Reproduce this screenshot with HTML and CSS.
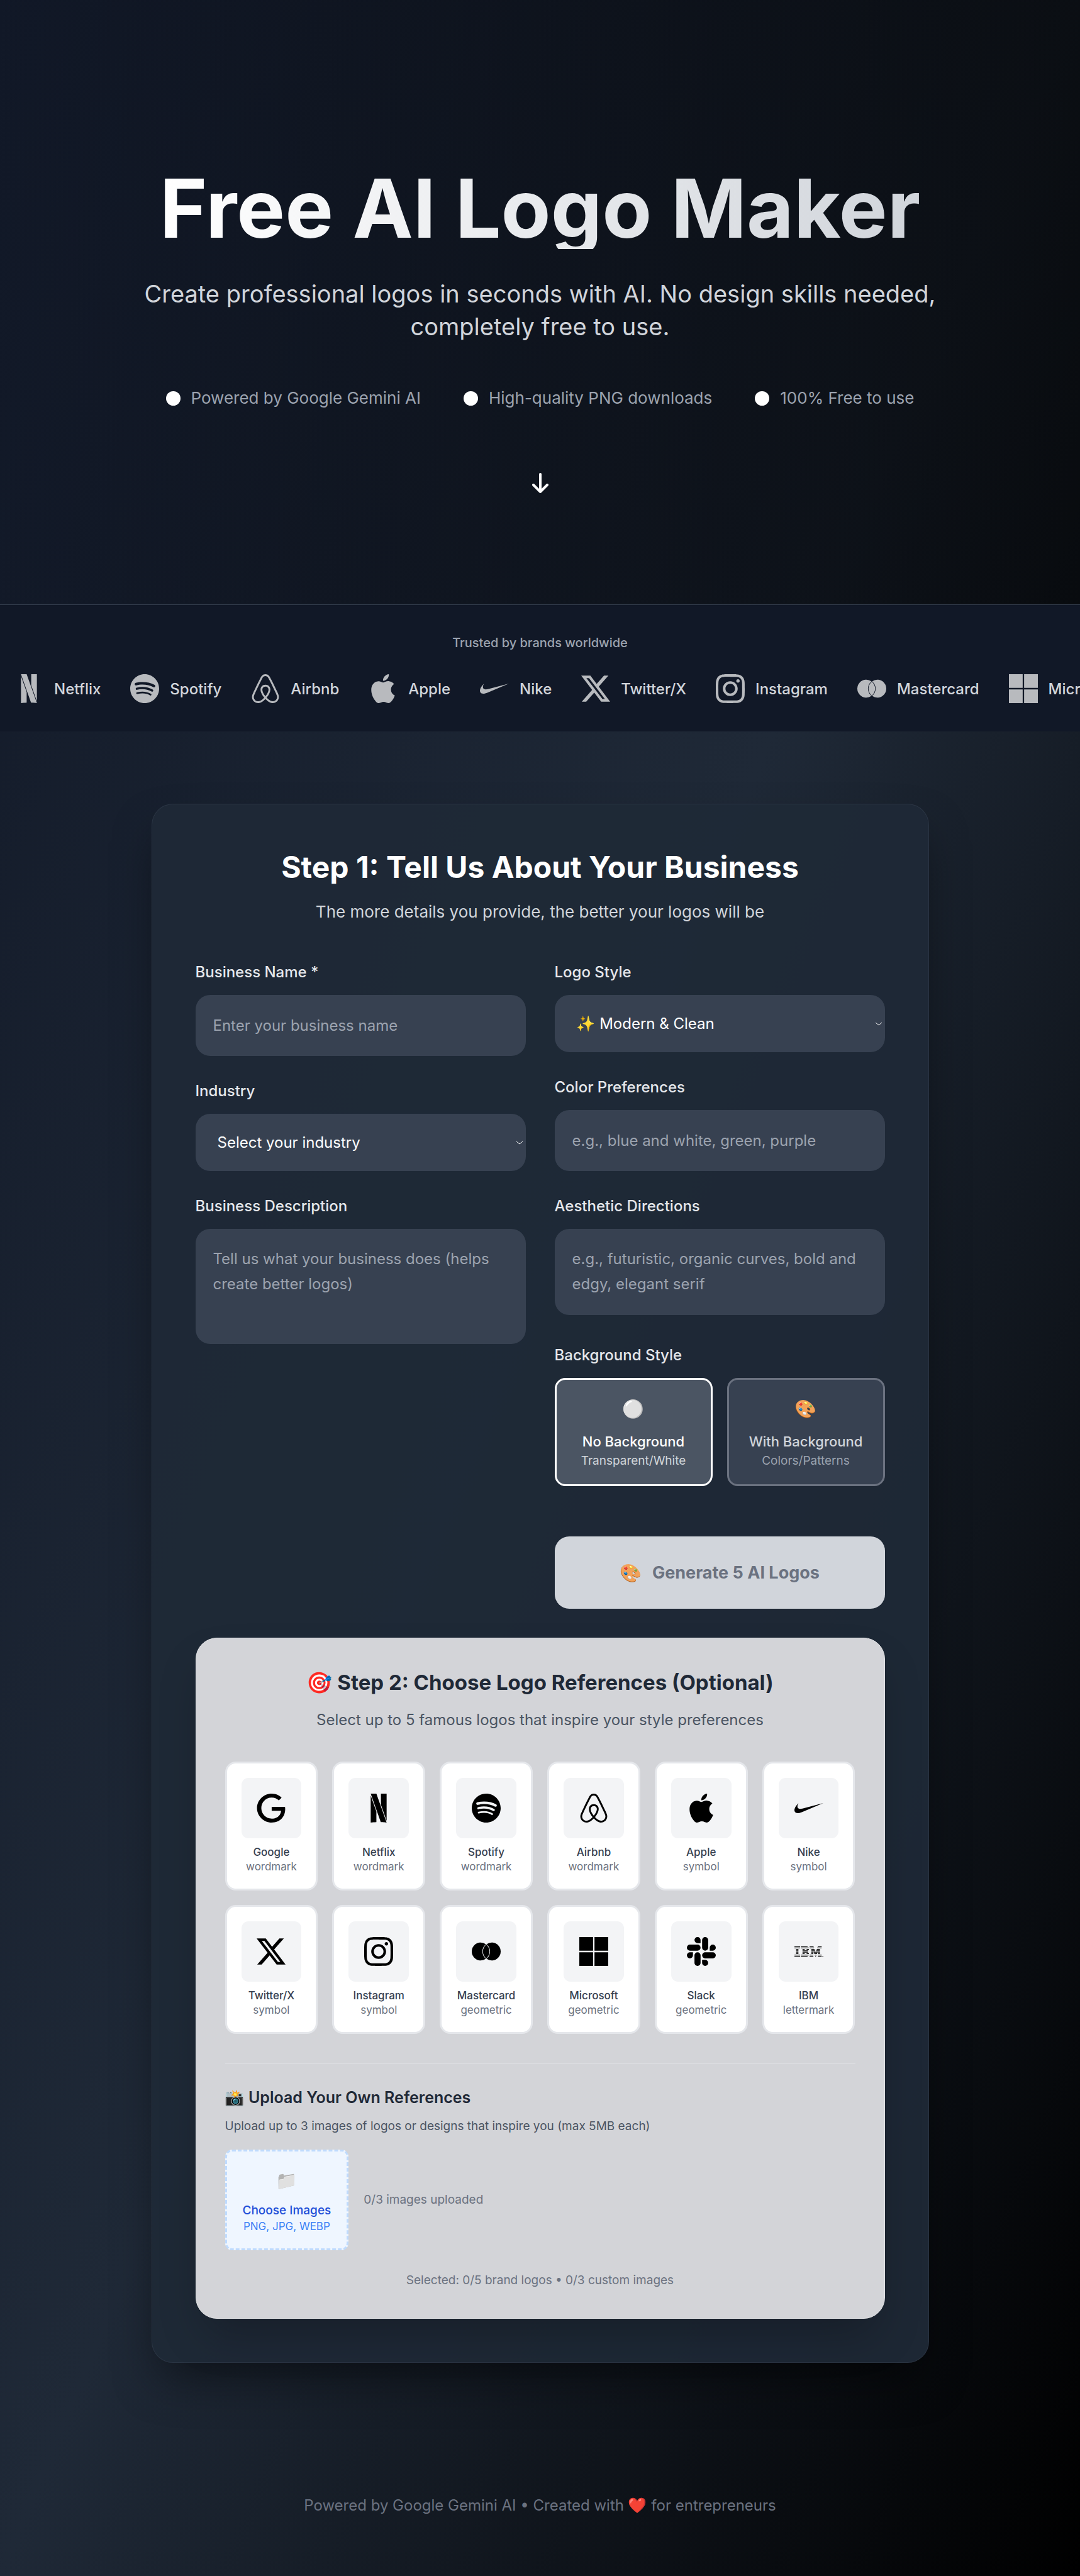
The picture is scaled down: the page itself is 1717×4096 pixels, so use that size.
FILE: index.html
```html
<!DOCTYPE html>
<html lang="en">
<head>
<meta charset="utf-8">
<meta name="viewport" content="width=device-width, initial-scale=1">
<title>Free AI Logo Maker</title>
<link rel="stylesheet" href="styles.css">
</head>
<body>
<svg class="sprite" aria-hidden="true">
  <symbol id="google" viewBox="0 0 24 24"><path d="M12.48 10.92v3.28h7.84c-.24 1.84-.853 3.187-1.787 4.133-1.147 1.147-2.933 2.4-6.053 2.4-4.827 0-8.6-3.893-8.6-8.72s3.773-8.72 8.6-8.72c2.6 0 4.507 1.027 5.907 2.347l2.307-2.307C18.747 1.44 16.133 0 12.48 0 5.867 0 .307 5.387.307 12s5.56 12 12.173 12c3.573 0 6.267-1.173 8.373-3.36 2.16-2.16 2.84-5.213 2.84-7.667 0-.76-.053-1.467-.173-2.053H12.48z"/></symbol>
  <symbol id="netflix" viewBox="0 0 24 24"><path d="m5.398 0 8.348 23.602c2.346.059 4.856.398 4.856.398L10.113 0H5.398zm8.489 0v9.172l4.715 13.33V0h-4.715zM5.398 1.5V24c1.873-.225 2.81-.312 4.715-.398V14.83L5.398 1.5z"/></symbol>
  <symbol id="spotify" viewBox="0 0 24 24"><path d="M12 0C5.4 0 0 5.4 0 12s5.4 12 12 12 12-5.4 12-12S18.66 0 12 0zm5.521 17.34c-.24.359-.66.48-1.021.24-2.82-1.74-6.36-2.101-10.561-1.141-.418.122-.779-.179-.899-.539-.12-.421.18-.78.54-.9 4.56-1.021 8.52-.6 11.64 1.32.42.18.479.659.301 1.02zm1.44-3.3c-.301.42-.841.6-1.262.3-3.239-1.98-8.159-2.58-11.939-1.38-.479.12-1.02-.12-1.14-.6-.12-.48.12-1.021.6-1.141C9.6 9.9 15 10.561 18.72 12.84c.361.181.54.78.241 1.2zm.12-3.36C15.24 8.4 8.82 8.16 5.16 9.301c-.6.179-1.2-.181-1.38-.721-.18-.601.18-1.2.72-1.381 4.26-1.26 11.28-1.02 15.721 1.621.539.3.719 1.02.419 1.56-.299.421-1.02.599-1.559.3z"/></symbol>
  <symbol id="airbnb" viewBox="0 0 24 24"><path d="M12.001 18.275c-1.353-1.697-2.148-3.184-2.413-4.457-.263-1.027-.16-1.848.291-2.465.477-.71 1.188-1.056 2.121-1.056s1.643.345 2.12 1.063c.446.61.558 1.432.286 2.465-.291 1.298-1.085 2.785-2.412 4.458zm9.601 1.14c-.185 1.246-1.034 2.28-2.2 2.783-2.253.98-4.483-.583-6.392-2.704 3.157-3.951 3.74-7.028 2.385-9.018-.795-1.14-1.933-1.695-3.394-1.695-2.944 0-4.563 2.49-3.927 5.382.37 1.565 1.352 3.343 2.917 5.332-.98 1.085-1.91 1.856-2.732 2.333-.636.344-1.245.558-1.828.609-2.679.399-4.778-2.2-3.825-4.88.132-.345.395-.98.845-1.961l.025-.053c1.464-3.178 3.242-6.79 5.285-10.795l.053-.132.58-1.116c.45-.822.635-1.19 1.351-1.643.346-.21.77-.315 1.246-.315.954 0 1.698.558 2.016 1.007.158.239.345.557.582.953l.558 1.089.08.159c2.041 4.004 3.821 7.608 5.279 10.794l.026.025.533 1.22.318.764c.243.613.294 1.222.213 1.858zm1.22-2.39c-.186-.583-.505-1.271-.9-2.094v-.03c-1.889-4.006-3.642-7.608-5.307-10.844l-.111-.163C15.317 1.461 14.468 0 12.001 0c-2.44 0-3.476 1.695-4.535 3.898l-.081.16c-1.669 3.236-3.421 6.843-5.303 10.847v.053l-.559 1.22c-.21.504-.317.768-.345.847C-.172 20.74 2.611 24 5.98 24c.027 0 .132 0 .265-.027h.372c1.75-.213 3.554-1.325 5.384-3.317 1.829 1.989 3.635 3.104 5.382 3.317h.372c.133.027.239.027.265.027 3.37.003 6.152-3.261 4.802-6.975z"/></symbol>
  <symbol id="apple" viewBox="0 0 24 24"><path d="M12.152 6.896c-.948 0-2.415-1.078-3.96-1.04-2.04.027-3.91 1.183-4.961 3.014-2.117 3.675-.546 9.103 1.519 12.09 1.013 1.454 2.208 3.09 3.792 3.039 1.52-.065 2.09-.987 3.935-.987 1.831 0 2.35.987 3.96.948 1.637-.026 2.676-1.48 3.676-2.948 1.156-1.688 1.636-3.325 1.662-3.415-.039-.013-3.182-1.221-3.22-4.857-.026-3.04 2.48-4.494 2.597-4.559-1.429-2.09-3.623-2.324-4.39-2.376-2-.156-3.675 1.09-4.61 1.09zM15.53 3.83c.843-1.012 1.4-2.427 1.245-3.83-1.207.052-2.662.805-3.532 1.818-.78.896-1.454 2.338-1.273 3.714 1.338.104 2.715-.688 3.559-1.701"/></symbol>
  <symbol id="nike" viewBox="0 0 24 24"><path d="M24 7.8L6.442 15.276c-1.456.616-2.679.925-3.668.925-1.12 0-1.933-.392-2.437-1.177-.317-.504-.41-1.143-.28-1.918.13-.775.476-1.6 1.036-2.478.467-.71 1.232-1.643 2.297-2.8a6.122 6.122 0 00-.784 1.848c-.28 1.195-.028 2.072.756 2.632.373.261.886.392 1.54.392.522 0 1.11-.084 1.764-.252L24 7.8z"/></symbol>
  <symbol id="twitter" viewBox="0 0 24 24"><path d="M18.901 1.153h3.68l-8.04 9.19L24 22.846h-7.406l-5.8-7.584-6.638 7.584H.474l8.6-9.83L0 1.154h7.594l5.243 6.932ZM17.61 20.644h2.039L6.486 3.24H4.298Z"/></symbol>
  <symbol id="instagram" viewBox="0 0 24 24"><path d="M12 0C8.74 0 8.333.015 7.053.072 5.775.132 4.905.333 4.14.63c-.789.306-1.459.717-2.126 1.384S.935 3.35.63 4.14C.333 4.905.131 5.775.072 7.053.012 8.333 0 8.74 0 12s.015 3.667.072 4.947c.06 1.277.261 2.148.558 2.913.306.788.717 1.459 1.384 2.126.667.666 1.336 1.079 2.126 1.384.766.296 1.636.499 2.913.558C8.333 23.988 8.74 24 12 24s3.667-.015 4.947-.072c1.277-.06 2.148-.262 2.913-.558.788-.306 1.459-.718 2.126-1.384.666-.667 1.079-1.335 1.384-2.126.296-.765.499-1.636.558-2.913.06-1.28.072-1.687.072-4.947s-.015-3.667-.072-4.947c-.06-1.277-.262-2.149-.558-2.913-.306-.789-.718-1.459-1.384-2.126C21.319 1.347 20.651.935 19.86.63c-.765-.297-1.636-.499-2.913-.558C15.667.012 15.26 0 12 0zm0 2.16c3.203 0 3.585.016 4.85.071 1.17.055 1.805.249 2.227.415.562.217.96.477 1.382.896.419.42.679.819.896 1.381.164.422.36 1.057.413 2.227.057 1.266.07 1.646.07 4.85s-.015 3.585-.074 4.85c-.061 1.17-.256 1.805-.421 2.227-.224.562-.479.96-.899 1.382-.419.419-.824.679-1.38.896-.42.164-1.065.36-2.235.413-1.274.057-1.649.07-4.859.07-3.211 0-3.586-.015-4.859-.074-1.171-.061-1.816-.256-2.236-.421-.569-.224-.96-.479-1.379-.899-.421-.419-.69-.824-.9-1.38-.165-.42-.359-1.065-.42-2.235-.045-1.26-.061-1.649-.061-4.844 0-3.196.016-3.586.061-4.861.061-1.17.255-1.814.42-2.234.21-.57.479-.96.9-1.381.419-.419.81-.689 1.379-.898.42-.166 1.051-.361 2.221-.421 1.275-.045 1.65-.06 4.859-.06l.045.03zm0 3.678c-3.405 0-6.162 2.76-6.162 6.162 0 3.405 2.76 6.162 6.162 6.162 3.405 0 6.162-2.76 6.162-6.162 0-3.405-2.76-6.162-6.162-6.162zM12 16c-2.21 0-4-1.79-4-4s1.79-4 4-4 4 1.79 4 4-1.79 4-4 4zm7.846-10.405c0 .795-.646 1.44-1.44 1.44-.795 0-1.44-.646-1.44-1.44 0-.794.646-1.439 1.44-1.439.793-.001 1.44.645 1.44 1.439z"/></symbol>
  <symbol id="mastercard" viewBox="0 0 24 24"><path d="M11.734 5.944A7.43 7.43 0 1 0 11.734 18.056A7.75 7.75 0 0 1 11.734 5.944ZM12.266 5.944A7.43 7.43 0 1 1 12.266 18.056A7.75 7.75 0 0 0 12.266 5.944ZM12 6.307A7.3 7.3 0 0 1 12 17.693A7.3 7.3 0 0 1 12 6.307Z"/></symbol>
  <symbol id="microsoft" viewBox="0 0 24 24"><path d="M0 0v11.408h11.408V0zm12.594 0v11.408H24V0zM0 12.594V24h11.408V12.594zm12.594 0V24H24V12.594z"/></symbol>
  <symbol id="slack" viewBox="0 0 24 24"><path d="M5.042 15.165a2.528 2.528 0 0 1-2.52 2.523A2.528 2.528 0 0 1 0 15.165a2.527 2.527 0 0 1 2.522-2.52h2.52v2.52zM6.313 15.165a2.527 2.527 0 0 1 2.521-2.52 2.527 2.527 0 0 1 2.521 2.52v6.313A2.528 2.528 0 0 1 8.834 24a2.528 2.528 0 0 1-2.521-2.522v-6.313zM8.834 5.042a2.528 2.528 0 0 1-2.521-2.52A2.528 2.528 0 0 1 8.834 0a2.528 2.528 0 0 1 2.521 2.522v2.52H8.834zM8.834 6.313a2.528 2.528 0 0 1 2.521 2.521 2.528 2.528 0 0 1-2.521 2.521H2.522A2.528 2.528 0 0 1 0 8.834a2.528 2.528 0 0 1 2.522-2.521h6.312zM18.956 8.834a2.528 2.528 0 0 1 2.522-2.521A2.528 2.528 0 0 1 24 8.834a2.528 2.528 0 0 1-2.522 2.521h-2.522V8.834zM17.688 8.834a2.528 2.528 0 0 1-2.523 2.521 2.527 2.527 0 0 1-2.52-2.521V2.522A2.527 2.527 0 0 1 15.165 0a2.528 2.528 0 0 1 2.523 2.522v6.312zM15.165 18.956a2.528 2.528 0 0 1 2.523 2.522A2.528 2.528 0 0 1 15.165 24a2.527 2.527 0 0 1-2.52-2.522v-2.522h2.52zM15.165 17.688a2.527 2.527 0 0 1-2.52-2.523 2.526 2.526 0 0 1 2.52-2.52h6.313A2.527 2.527 0 0 1 24 15.165a2.528 2.528 0 0 1-2.522 2.523h-6.313z"/></symbol>
  <symbol id="ibm" viewBox="0 0 24 24"><g fill="none" stroke="currentColor" stroke-width=".62">
    <path d="M0 7.8h4.7M5.3 7.8h5.6M12.6 7.8h3.3M19.3 7.8h3.3"/>
    <path d="M0 9h4.7M5.3 9h6.5M12.6 9h3.7M18.9 9h3.7"/>
    <path d="M1.4 10.2h1.9M6.7 10.2h1.8M10.1 10.2h1.9M14 10.2h2.7M18.5 10.2h2.7"/>
    <path d="M1.4 11.4h1.9M6.7 11.4h4.6M14 11.4h3.1M18.1 11.4h3.1"/>
    <path d="M1.4 12.6h1.9M6.7 12.6h4.6M14 12.6h1.7M16 12.6h3.2M19.5 12.6h1.7"/>
    <path d="M1.4 13.8h1.9M6.7 13.8h1.8M10.1 13.8h1.9M14 13.8h1.7M16.4 13.8h2.4M19.5 13.8h1.7"/>
    <path d="M0 15h4.7M5.3 15h6.5M12.6 15h3.1M16.8 15h1.6M19.5 15h3.1"/>
    <path d="M0 16.2h4.7M5.3 16.2h5.6M12.6 16.2h3.1M17.3 16.2h.6M19.5 16.2h3.1M23.2 16.2h.7"/></g></symbol>
</svg>

<header class="hero">
  <h1 class="hero-title">Free AI Logo Maker</h1>
  <p class="hero-lead">Create professional logos in seconds with AI. No design skills needed, completely free to use.</p>
  <ul class="features">
    <li class="feature">Powered by Google Gemini AI</li>
    <li class="feature">High-quality PNG downloads</li>
    <li class="feature">100% Free to use</li>
  </ul>
  <svg class="hero-arrow" viewBox="0 0 26 32" aria-hidden="true"><path d="M13 2v28M2 19l11 11 11-11"/></svg>
</header>

<section class="brands">
  <p class="brands-title">Trusted by brands worldwide</p>
  <ul class="brand-list">
    <li class="brand"><svg class="logo"><use href="#netflix"/></svg>Netflix</li>
    <li class="brand"><svg class="logo"><use href="#spotify"/></svg>Spotify</li>
    <li class="brand"><svg class="logo"><use href="#airbnb"/></svg>Airbnb</li>
    <li class="brand"><svg class="logo"><use href="#apple"/></svg>Apple</li>
    <li class="brand"><svg class="logo"><use href="#nike"/></svg>Nike</li>
    <li class="brand"><svg class="logo"><use href="#twitter"/></svg>Twitter/X</li>
    <li class="brand"><svg class="logo"><use href="#instagram"/></svg>Instagram</li>
    <li class="brand"><svg class="logo"><use href="#mastercard"/></svg>Mastercard</li>
    <li class="brand"><svg class="logo"><use href="#microsoft"/></svg>Microsoft</li>
  </ul>
</section>

<main class="main">
  <form class="card">
    <div class="card-head">
      <h2 class="card-title">Step 1: Tell Us About Your Business</h2>
      <p class="card-lead">The more details you provide, the better your logos will be</p>
    </div>

    <div class="form-grid">
      <div class="column">
        <div class="field">
          <label class="label" for="name">Business Name *</label>
          <input class="control" id="name" type="text" placeholder="Enter your business name">
        </div>
        <div class="field">
          <label class="label" for="industry">Industry</label>
          <div class="select-wrap">
            <select class="control select" id="industry"><option>Select your industry</option></select>
            <svg class="chevron" viewBox="0 0 12 8" aria-hidden="true"><path d="M1 2l5 4 5-4"/></svg>
          </div>
        </div>
        <div class="field">
          <label class="label" for="description">Business Description</label>
          <textarea class="control area area-tall" id="description" placeholder="Tell us what your business does (helps create better logos)"></textarea>
        </div>
      </div>

      <div class="column">
        <div class="field">
          <label class="label" for="style">Logo Style</label>
          <div class="select-wrap">
            <select class="control select" id="style"><option>✨ Modern &amp; Clean</option></select>
            <svg class="chevron" viewBox="0 0 12 8" aria-hidden="true"><path d="M1 2l5 4 5-4"/></svg>
          </div>
        </div>
        <div class="field">
          <label class="label" for="colors">Color Preferences</label>
          <input class="control" id="colors" type="text" placeholder="e.g., blue and white, green, purple">
        </div>
        <div class="field">
          <label class="label" for="aesthetic">Aesthetic Directions</label>
          <textarea class="control area" id="aesthetic" placeholder="e.g., futuristic, organic curves, bold and edgy, elegant serif"></textarea>
        </div>
        <div class="field" role="group" aria-labelledby="bg-label">
          <span class="label" id="bg-label">Background Style</span>
          <div class="options">
            <button class="option option-active" type="button" aria-pressed="true"><span class="emoji">⚪</span><span class="option-name">No Background</span><span class="option-note">Transparent/White</span></button>
            <button class="option" type="button" aria-pressed="false"><span class="emoji">🎨</span><span class="option-name">With Background</span><span class="option-note">Colors/Patterns</span></button>
          </div>
        </div>
        <button class="generate" type="submit"><span class="emoji">🎨</span>Generate 5 AI Logos</button>
      </div>
    </div>

    <section class="panel">
      <h3 class="panel-title">🎯 Step 2: Choose Logo References (Optional)</h3>
      <p class="panel-lead">Select up to 5 famous logos that inspire your style preferences</p>
      <div class="tiles">
        <button class="tile" type="button"><span class="tile-icon"><svg class="logo"><use href="#google"/></svg></span><span class="tile-name">Google</span><span class="tile-kind">wordmark</span></button>
        <button class="tile" type="button"><span class="tile-icon"><svg class="logo"><use href="#netflix"/></svg></span><span class="tile-name">Netflix</span><span class="tile-kind">wordmark</span></button>
        <button class="tile" type="button"><span class="tile-icon"><svg class="logo"><use href="#spotify"/></svg></span><span class="tile-name">Spotify</span><span class="tile-kind">wordmark</span></button>
        <button class="tile" type="button"><span class="tile-icon"><svg class="logo"><use href="#airbnb"/></svg></span><span class="tile-name">Airbnb</span><span class="tile-kind">wordmark</span></button>
        <button class="tile" type="button"><span class="tile-icon"><svg class="logo"><use href="#apple"/></svg></span><span class="tile-name">Apple</span><span class="tile-kind">symbol</span></button>
        <button class="tile" type="button"><span class="tile-icon"><svg class="logo"><use href="#nike"/></svg></span><span class="tile-name">Nike</span><span class="tile-kind">symbol</span></button>
        <button class="tile" type="button"><span class="tile-icon"><svg class="logo"><use href="#twitter"/></svg></span><span class="tile-name">Twitter/X</span><span class="tile-kind">symbol</span></button>
        <button class="tile" type="button"><span class="tile-icon"><svg class="logo"><use href="#instagram"/></svg></span><span class="tile-name">Instagram</span><span class="tile-kind">symbol</span></button>
        <button class="tile" type="button"><span class="tile-icon"><svg class="logo"><use href="#mastercard"/></svg></span><span class="tile-name">Mastercard</span><span class="tile-kind">geometric</span></button>
        <button class="tile" type="button"><span class="tile-icon"><svg class="logo"><use href="#microsoft"/></svg></span><span class="tile-name">Microsoft</span><span class="tile-kind">geometric</span></button>
        <button class="tile" type="button"><span class="tile-icon"><svg class="logo"><use href="#slack"/></svg></span><span class="tile-name">Slack</span><span class="tile-kind">geometric</span></button>
        <button class="tile" type="button"><span class="tile-icon"><svg class="logo"><use href="#ibm"/></svg></span><span class="tile-name">IBM</span><span class="tile-kind">lettermark</span></button>
      </div>

      <div class="upload">
        <h4 class="upload-title">📸 Upload Your Own References</h4>
        <p class="upload-lead">Upload up to 3 images of logos or designs that inspire you (max 5MB each)</p>
        <div class="upload-row">
          <button class="dropzone" type="button"><span class="emoji emoji-grey">📁</span><span class="dropzone-name">Choose Images</span><span class="dropzone-note">PNG, JPG, WEBP</span></button>
          <span class="muted">0/3 images uploaded</span>
        </div>
      </div>
      <p class="summary muted">Selected: 0/5 brand logos • 0/3 custom images</p>
    </section>
  </form>
</main>

<footer class="footer">Powered by Google Gemini AI • Created with ❤️ for entrepreneurs</footer>
</body>
</html>
```
FILE: styles.css
```css
*, *::before, *::after { box-sizing: border-box; }

body {
  margin: 0;
  font-family: Inter, "Noto Color Emoji", sans-serif;
  color: #fff;
  background: linear-gradient(to bottom right, #111827, #1f2937, #000);
}

h1, h2, h3, h4, p, ul { margin: 0; padding: 0; }
ul { list-style: none; }
button, input, select, textarea { font-family: inherit; }
button { cursor: pointer; }

.sprite { display: none; }
.logo { display: block; flex: none; width: 46px; height: 46px; fill: currentColor; }

/* Hero */
.hero {
  display: flex;
  flex-direction: column;
  align-items: center;
  padding: 266px 40px 177px;
  text-align: center;
  background: linear-gradient(to right, rgba(17, 24, 39, .65), rgba(0, 0, 0, .65));
}
.hero-title {
  font-size: 129px;
  line-height: 130px;
  font-weight: 700;
  color: transparent;
  background: linear-gradient(to right, #fff, #d1d5db);
  -webkit-background-clip: text;
  background-clip: text;
}
.hero-lead {
  max-width: 1290px;
  margin-top: 45px;
  font-size: 38px;
  line-height: 52px;
  color: #d1d5db;
}
.features {
  display: flex;
  flex-wrap: wrap;
  justify-content: center;
  gap: 68px;
  margin-top: 68px;
}
.feature {
  display: flex;
  align-items: center;
  gap: 17px;
  font-size: 26px;
  line-height: 40px;
  color: #9ca3af;
}
.feature::before {
  content: "";
  width: 23px;
  height: 23px;
  border-radius: 50%;
  background: #fff;
}
.hero-arrow {
  width: 26px;
  height: 32px;
  margin-top: 99px;
  fill: none;
  stroke: #fff;
  stroke-width: 4;
  stroke-linecap: round;
  stroke-linejoin: round;
}

/* Brand strip */
.brands {
  padding: 46px 0 45px;
  overflow: hidden;
  border-top: 1px solid #374151;
  background: #111827;
}
.brands-title {
  font-size: 20px;
  line-height: 28px;
  font-weight: 500;
  text-align: center;
  color: #9ca3af;
}
.brand-list {
  display: flex;
  gap: 47px;
  margin-top: 36px;
  padding-left: 23px;
}
.brand {
  display: flex;
  flex: none;
  align-items: center;
  gap: 17px;
  font-size: 24px;
  font-weight: 500;
  color: #d1d5db;
}
.brand .logo { color: #b8babe; }

/* Form card */
.main { padding: 115px 40px; }
.card {
  max-width: 1236px;
  margin: 0 auto;
  padding: 69px;
  border: 1px solid rgba(55, 65, 81, .5);
  border-radius: 34px;
  background: rgba(31, 41, 55, .95);
  box-shadow: 0 36px 72px -17px rgba(0, 0, 0, .5);
}
.card-head { margin-bottom: 58px; text-align: center; }
.card-title { font-size: 48px; line-height: 62px; font-weight: 700; }
.card-lead { margin-top: 20px; font-size: 26px; line-height: 40px; color: #d1d5db; }

.form-grid {
  display: grid;
  grid-template-columns: 1fr 1fr;
  gap: 46px;
}
.column { display: flex; flex-direction: column; gap: 38px; }
.field { display: flex; flex-direction: column; }
.label {
  margin-bottom: 18px;
  font-size: 24px;
  line-height: 36px;
  font-weight: 500;
  color: #e5e7eb;
}
.control {
  width: 100%;
  height: 97px;
  padding: 0 28px;
  border: 0;
  border-radius: 23px;
  font-size: 24px;
  line-height: 40px;
  color: #fff;
  background: #374151;
}
.control::placeholder { color: #9ca3af; opacity: 1; }
.select-wrap { position: relative; }
.select {
  display: block;
  height: 91px;
  padding: 0 35px;
  appearance: none;
}
.chevron {
  position: absolute;
  top: 42px;
  right: 4px;
  width: 12px;
  height: 8px;
  fill: none;
  stroke: #fff;
  stroke-width: 1;
  pointer-events: none;
}
.area {
  height: 137px;
  margin-bottom: 8px;
  padding: 28px;
  resize: none;
}
.area-tall { height: 183px; }

.emoji { font-size: 28px; line-height: 46px; }
.emoji-grey { filter: grayscale(1); }

.options { display: grid; grid-template-columns: 1fr 1fr; gap: 23px; }
.option {
  display: flex;
  flex-direction: column;
  align-items: center;
  padding: 23px 10px;
  border: 3px solid #6b7280;
  border-radius: 17px;
  color: #d1d5db;
  background: #374151;
}
.option-active { border-color: #fff; color: #fff; background: #4b5563; }
.option-name { margin-top: 12px; font-size: 22px; line-height: 34px; font-weight: 500; }
.option-note { font-size: 19px; line-height: 28px; color: #9ca3af; }
.option-active .option-note { color: #d1d5db; }

.generate {
  display: flex;
  align-items: center;
  justify-content: center;
  gap: 17px;
  height: 115px;
  margin-top: 42px;
  border: 0;
  border-radius: 23px;
  font-size: 27px;
  font-weight: 700;
  color: #6b7280;
  background: #d1d5db;
}

/* References panel */
.panel {
  margin-top: 46px;
  padding: 46px;
  border: 1px solid #e0e1e4;
  border-radius: 34px;
  color: #1f2937;
  background: #d3d4d8;
  box-shadow: 0 36px 72px -17px rgba(0, 0, 0, .25);
}
.panel-title { font-size: 33px; line-height: 48px; font-weight: 700; text-align: center; }
.panel-lead { margin-top: 16px; font-size: 24px; line-height: 40px; text-align: center; color: #4b5563; }
.tiles {
  display: grid;
  grid-template-columns: repeat(6, 1fr);
  gap: 23px;
  margin-top: 46px;
}
.tile {
  display: flex;
  flex-direction: column;
  padding: 23px;
  border: 3px solid #e5e7eb;
  border-radius: 17px;
  font-size: 17px;
  line-height: 23px;
  text-align: center;
  background: #fff;
}
.tile-icon {
  display: flex;
  align-items: center;
  justify-content: center;
  align-self: stretch;
  height: 96px;
  margin-bottom: 11px;
  border-radius: 11px;
  color: #000;
  background: #f3f4f6;
}
.tile-name, .tile-kind { align-self: center; }
.tile-name { font-weight: 500; color: #374151; }
.tile-kind { color: #6b7280; }

.upload {
  margin-top: 46px;
  padding-top: 34px;
  border-top: 1px solid #e5e7eb;
}
.upload-title { font-size: 25px; line-height: 40px; font-weight: 600; }
.upload-lead { margin-top: 12px; font-size: 19px; line-height: 28px; color: #4b5563; }
.upload-row { display: flex; align-items: center; gap: 24px; margin-top: 23px; }
.dropzone {
  display: flex;
  flex-direction: column;
  align-items: center;
  padding: 23px 25px;
  border: 3px dashed #bfdbfe;
  border-radius: 11px;
  background: #eff6ff;
}
.dropzone-name { margin-top: 11px; font-size: 19px; line-height: 28px; font-weight: 500; color: #1d4ed8; }
.dropzone-note { font-size: 17px; line-height: 23px; color: #3b82f6; }
.muted { font-size: 19px; line-height: 28px; color: #6b7280; }
.summary { margin-top: 34px; text-align: center; }

.footer {
  padding: 92px 40px;
  font-size: 24px;
  line-height: 40px;
  text-align: center;
  color: #6b7280;
}
```
